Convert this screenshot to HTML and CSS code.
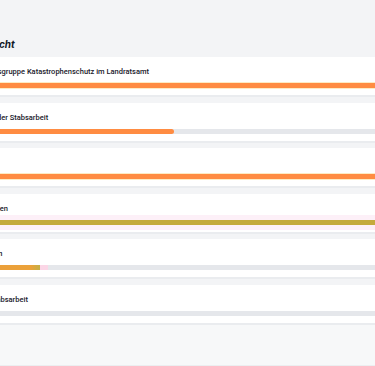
FILE: index.html
```html
<!DOCTYPE html>
<html lang="de">
<head>
    <meta charset="UTF-8">
    <title>Übersicht</title>
    <link rel="stylesheet" href="styles.css">
</head>
<body>

    <div class="page">
        <h2 class="title">Übersicht</h2>

        <div class="modules">
            <div class="module">
                <div class="module-name">Führungsgruppe Katastrophenschutz im Landratsamt</div>
                <div class="track"><div class="fill done" style="width: 100%"></div></div>
            </div>
            <div class="module">
                <div class="module-name">Phasen der Stabsarbeit</div>
                <div class="track"><div class="fill" style="width: 46.4%"></div></div>
            </div>
            <div class="module">
                <div class="module-name">Einsatz</div>
                <div class="track"><div class="fill done" style="width: 100%"></div></div>
            </div>
            <div class="module">
                <div class="module-name">Lagekarten</div>
                <div class="track alert"><div class="fill olive" style="width: 100%"></div></div>
            </div>
            <div class="module">
                <div class="module-name">Aufgaben</div>
                <div class="track"><div class="fill running" style="width: 78px"></div></div>
            </div>
            <div class="module">
                <div class="module-name">Neue Stabsarbeit</div>
                <div class="track"><div class="fill" style="width: 0%"></div></div>
            </div>
        </div>

        <div class="footer"></div>
    </div>

</body>
</html>
```

FILE: styles.css
```css
html, body {
    overflow: hidden;
}

body {
    margin: 0;
    background-color: #f3f4f6;
    font-family: Roboto, "Liberation Sans", sans-serif;
    color: #1a202c;
}

.page {
    width: 460px;
    margin-left: -40px;
    padding-top: 38px;
}

.title {
    margin: 0 0 7px 7px;
    font-family: Inter, "Liberation Sans", sans-serif;
    font-size: 10px;
    line-height: 12px;
    font-weight: 700;
    font-style: italic;
    color: #111827;
}

.modules {
    display: flex;
    flex-direction: column;
    gap: 7.6px;
}

.module {
    background-color: #ffffff;
    padding: 10px 10px 7px;
    box-shadow: 0 2px 0 #eaecef;
}

.module-name {
    font-size: 7.5px;
    line-height: 10px;
    font-weight: 500;
    margin-bottom: 6px;
    white-space: nowrap;
}

.track {
    height: 5px;
    background-color: #e5e7eb;
    border-radius: 3px;
}

.track.alert {
    box-shadow: 0 0 0 5px #fdf0f8;
}

.fill {
    height: 100%;
    border-radius: 3px;
    background-color: #ff8c42;
}

.fill.done {
    box-shadow: 0 0 0 1px #fdecc4;
}

.fill.olive {
    background-color: #c4aa3c;
}

.fill.running {
    border-radius: 3px 0 0 3px;
    background: linear-gradient(to right, #eb9d3a 0, #eba23a 78%, #c8ae44 88%, #c8ae44 90%, #fbd6e6 90%);
}

.footer {
    height: 40px;
    margin-top: 2px;
    background-color: #f7f8f9;
    border-bottom: 2px solid #eceef0;
}
```
